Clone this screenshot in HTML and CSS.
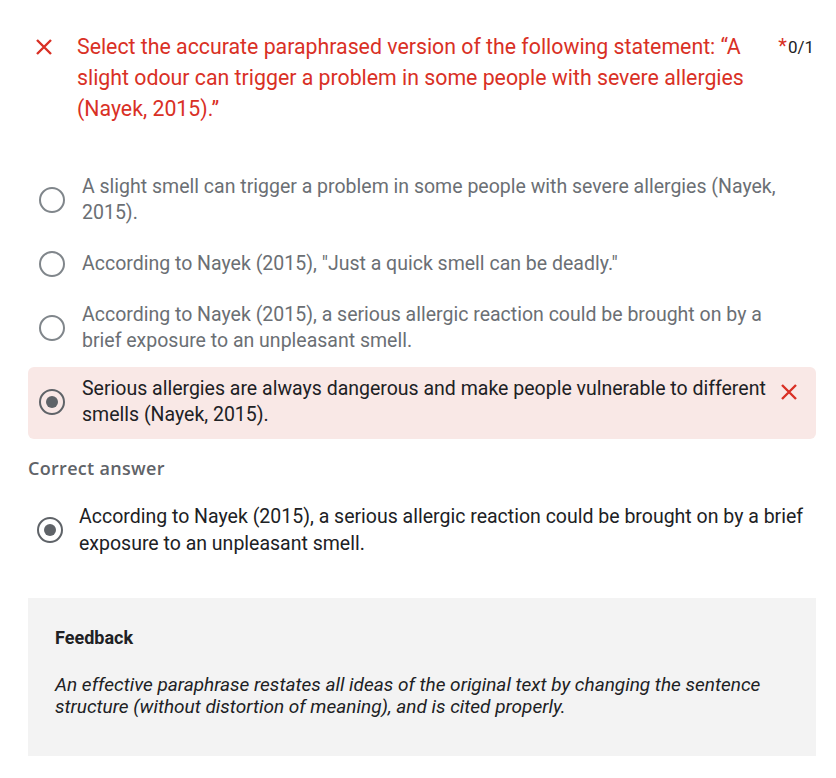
FILE: index.html
```html
<!DOCTYPE html>
<html lang="en">
<head>
<meta charset="utf-8">
<title>Quiz result</title>
<link rel="stylesheet" href="styles.css">
</head>
<body>
<div class="page">
  <div class="question-head">
    <svg class="x-icon head-x" viewBox="0 0 18 18" aria-hidden="true"><path d="M2 2 L16 16 M16 2 L2 16"/></svg>
    <div class="question-title">Select the accurate paraphrased version of the following statement: “A slight odour can trigger a problem in some people with severe allergies (Nayek, 2015).”</div>
    <div class="score"><span class="req">*</span>0/1</div>
  </div>

  <div class="options">
    <div class="option">
      <span class="radio"></span>
      <div class="opt-text">A slight smell can trigger a problem in some people with severe allergies (Nayek, 2015).</div>
    </div>
    <div class="option">
      <span class="radio"></span>
      <div class="opt-text">According to Nayek (2015), "Just a quick smell can be deadly."</div>
    </div>
    <div class="option">
      <span class="radio"></span>
      <div class="opt-text">According to Nayek (2015), a serious allergic reaction could be brought on by a brief exposure to an unpleasant smell.</div>
    </div>
    <div class="option wrong">
      <span class="radio checked"></span>
      <div class="opt-text">Serious allergies are always dangerous and make people vulnerable to different smells (Nayek, 2015).</div>
      <svg class="x-icon opt-x" viewBox="0 0 18 18" aria-hidden="true"><path d="M2 2 L16 16 M16 2 L2 16"/></svg>
    </div>
  </div>

  <div class="correct-label">Correct answer</div>
  <div class="correct-option">
    <span class="radio checked"></span>
    <div class="opt-text">According to Nayek (2015), a serious allergic reaction could be brought on by a brief exposure to an unpleasant smell.</div>
  </div>

  <div class="feedback">
    <div class="feedback-title">Feedback</div>
    <div class="feedback-text">An effective paraphrase restates all ideas of the original text by changing the sentence structure (without distortion of meaning), and is cited properly.</div>
  </div>
</div>
</body>
</html>
```

FILE: styles.css
```css
* { box-sizing: border-box; }

body {
  margin: 0;
  background: #ffffff;
  font-family: Roboto, "Liberation Sans", Arial, sans-serif;
  color: #202124;
}

.page {
  padding: 31px 20px 0 28px;
}

.question-head {
  display: flex;
  align-items: flex-start;
}

.x-icon {
  flex: none;
  width: 18px;
  height: 18px;
  fill: none;
  stroke: #d93025;
  stroke-width: 2.4;
}

.head-x {
  margin: 7px 24px 0 7px;
}

.question-title {
  flex: 1;
  font-size: 21.3px;
  line-height: 31px;
  color: #d93025;
  padding-right: 16px;
}

.score {
  flex: none;
  font-size: 17px;
  line-height: 31px;
  color: #202124;
  padding-right: 2px;
}

.req {
  color: #d93025;
  font-size: 20px;
  margin-right: 1px;
}

.options {
  margin-top: 38px;
  display: flex;
  flex-direction: column;
}

.option {
  display: flex;
  align-items: center;
  padding: 12px 26px 13px 11px;
}

.radio {
  flex: none;
  width: 26px;
  height: 26px;
  border: 2.5px solid #80868b;
  border-radius: 50%;
  margin-right: 17px;
  display: flex;
  align-items: center;
  justify-content: center;
}

.radio.checked {
  border-color: #5f6368;
}

.radio.checked::after {
  content: "";
  width: 12px;
  height: 12px;
  border-radius: 50%;
  background: #5f6368;
}

.opt-text {
  flex: 1;
  font-size: 19.5px;
  line-height: 26px;
  color: #6b6f74;
}

.option.wrong {
  background: #f9e8e6;
  border-radius: 6px;
  padding: 9px 18px 11px 11px;
}

.option.wrong .opt-text {
  color: #202124;
  padding-right: 10px;
}

.opt-x {
  align-self: flex-start;
  margin-top: 7px;
}

.correct-label {
  margin-top: 17px;
  font-family: "Open Sans", Roboto, sans-serif;
  font-size: 18px;
  font-weight: 600;
  letter-spacing: 0.3px;
  line-height: 24px;
  color: #5f6368;
}

.correct-option {
  display: flex;
  align-items: center;
  margin-top: 23px;
  padding: 0 4px 0 9px;
}

.correct-option .opt-text {
  color: #202124;
  line-height: 27px;
}

.correct-option .radio {
  margin-right: 16px;
}

.feedback {
  margin-top: 41px;
  background: #f3f3f3;
  padding: 28px 27px 36px 27px;
  min-height: 158px;
}

.feedback-title {
  font-size: 18px;
  font-weight: 700;
  line-height: 24px;
  color: #202124;
}

.feedback-text {
  margin-top: 24px;
  font-size: 19px;
  font-style: italic;
  line-height: 22px;
  color: #202124;
}
```
